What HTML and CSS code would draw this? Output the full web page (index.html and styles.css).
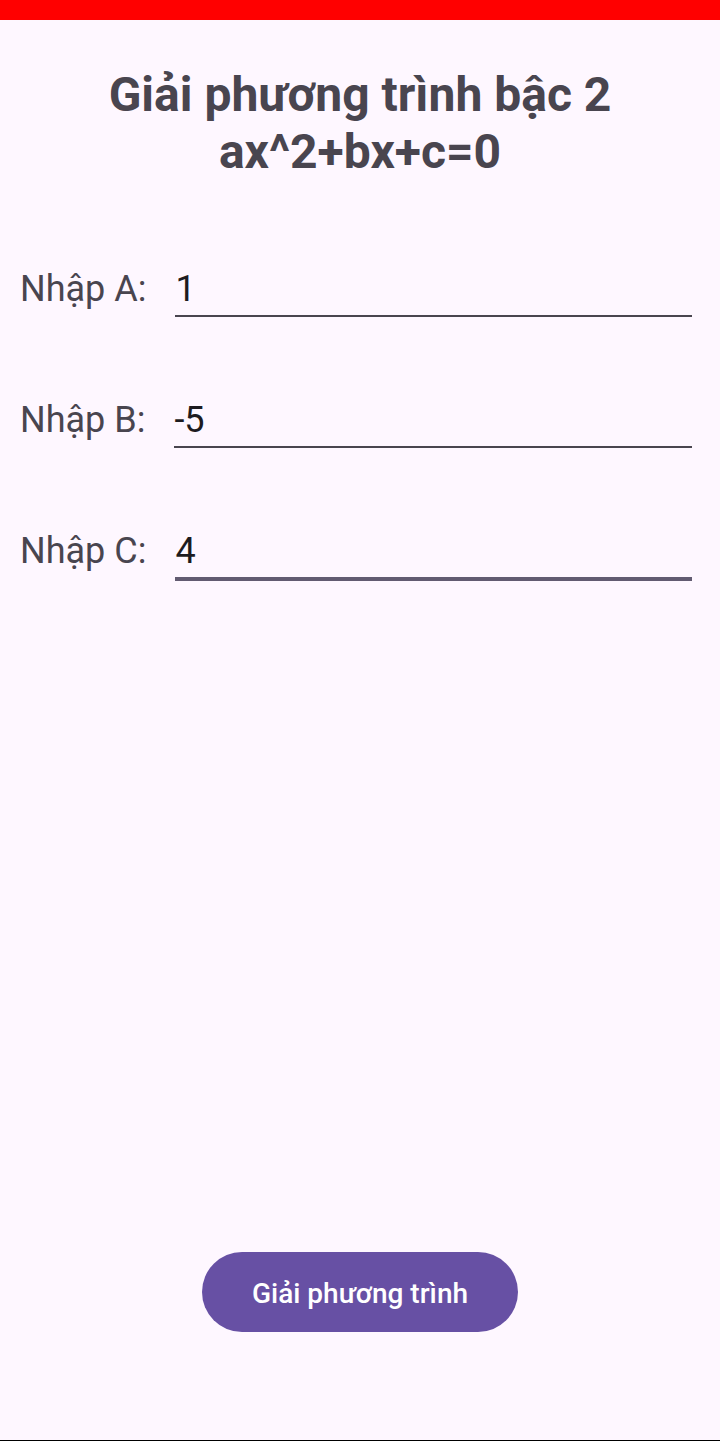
FILE: index.html
```html
<!DOCTYPE html>
<html lang="vi">
<head>
<meta charset="utf-8">
<meta name="viewport" content="width=device-width, initial-scale=1">
<title>Giải phương trình bậc 2</title>
<link rel="stylesheet" href="styles.css">
</head>
<body>
<form class="screen">
  <h1 class="title">Giải phương trình bậc 2<br>ax^2+bx+c=0</h1>
  <div class="fields">
    <div class="field">
      <label class="label" for="a">Nhập A:</label>
      <input class="input" id="a" type="text" inputmode="decimal" value="1">
    </div>
    <div class="field">
      <label class="label" for="b">Nhập B:</label>
      <input class="input" id="b" type="text" inputmode="decimal" value="-5">
    </div>
    <div class="field">
      <label class="label" for="c">Nhập C:</label>
      <input class="input input-active" id="c" type="text" inputmode="decimal" value="4">
    </div>
  </div>
  <button class="solve" type="button">Giải phương trình</button>
</form>
</body>
</html>
```

FILE: styles.css
```css
* {
  box-sizing: border-box;
}

body {
  margin: 0;
  font-family: Roboto, "Noto Sans", sans-serif;
  color: #49454f;
  background: #fef7ff;
}

.screen {
  display: flex;
  flex-direction: column;
  min-height: 100vh;
  padding: 46px 20px 108px;
  border-top: 20px solid #ff0000;
  border-bottom: 1px solid #000000;
}

.title {
  margin: 0;
  font-size: 48px;
  line-height: 57px;
  font-weight: 700;
  text-align: center;
}

.fields {
  display: flex;
  flex-direction: column;
  gap: 79px;
  margin-top: 85px;
  padding-right: 8px;
}

.field {
  display: flex;
  align-items: flex-start;
  gap: 29px;
  height: 52px;
}

.label {
  font-size: 36px;
  line-height: 48px;
}

.input {
  flex: 1;
  min-width: 0;
  height: 52px;
  padding: 0 0 2px;
  border: 0;
  border-bottom: 2px solid #49454f;
  border-radius: 0;
  outline: 0;
  background: transparent;
  color: #1d1b20;
  font: inherit;
  font-size: 36px;
  line-height: 48px;
}

.input-active {
  height: 54px;
  border-bottom: 4px solid #625b71;
}

.solve {
  align-self: center;
  height: 80px;
  margin-top: auto;
  padding: 2px 50px 0;
  border: 0;
  border-radius: 40px;
  background: #6750a4;
  color: #ffffff;
  font: inherit;
  font-size: 28px;
  font-weight: 500;
}
```
